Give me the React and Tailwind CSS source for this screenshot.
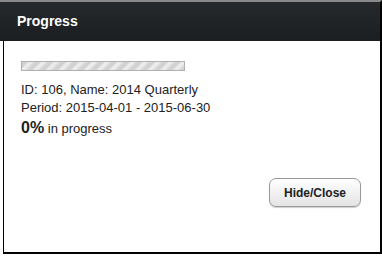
import React from 'react';

const stripes = {
  backgroundImage:
    'repeating-linear-gradient(-45deg, #cfcfcf 0px, #d6d6d6 3px, #ececec 5px, #ececec 7px, #cfcfcf 9px)',
};

const App = () => {
  return (
    <div className="w-[382px] h-[256px] bg-white font-['Liberation_Sans',Arial,sans-serif] flex flex-col">
      {/* title bar */}
      <div className="h-[41px] w-[382px] border-t-2 border-[#8a8a8a] border-r-2 border-r-black bg-gradient-to-b from-[#262a2c] to-[#1b1e20] flex items-center pl-[17px]">
        <span className="text-white font-bold text-[14px]">Progress</span>
      </div>

      {/* body */}
      <div className="ml-[3px] w-[379px] h-[213px] border-l border-r-2 border-b-2 border-black flex flex-col">
        <div className="pl-[17px] pt-[20px]">
          <div
            className="w-[164px] h-[10px] border border-[#b0b0b0]"
            style={stripes}
          />
          <div className="mt-[10px] text-[13px] leading-[18px] text-[#222]">
            <p>ID: 106, Name: 2014 Quarterly</p>
            <p>Period: 2015-04-01 - 2015-06-30</p>
            <p className="mt-[1px] leading-[20px]">
              <span className="font-bold text-[16px]">0%</span> in progress
            </p>
          </div>
        </div>
        <div className="flex justify-end pr-[19px] mt-[39px]">
          <button className="w-[92px] h-[29px] rounded-[7px] border border-[#9a9a9a] bg-gradient-to-b from-white to-[#e4e4e4] text-[12px] font-bold text-[#222] shadow-[0_1px_1px_rgba(0,0,0,0.2)]">
            Hide/Close
          </button>
        </div>
      </div>
    </div>
  );
};

export default App;
